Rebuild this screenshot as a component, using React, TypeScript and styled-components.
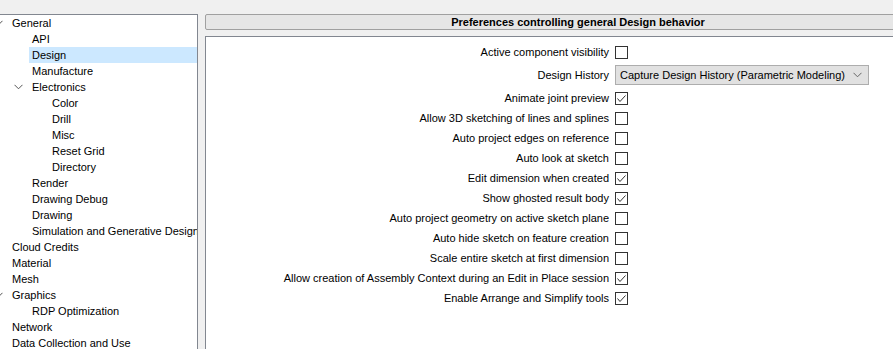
import React from 'react';
import styled, { createGlobalStyle } from 'styled-components';

const GlobalStyle = createGlobalStyle`
  html, body {
    margin: 0;
    padding: 0;
    background: #f0f0f0;
    overflow: hidden;
    font-family: 'Liberation Sans', Arial, sans-serif;
    font-size: 11px;
    color: #000;
  }
`;

const Page = styled.div`
  display: flex;
  align-items: flex-start;
  padding-top: 14px;
  height: 335px;
  overflow: hidden;
`;

const TreePanel = styled.div`
  flex: 0 0 198px;
  height: 360px;
  box-sizing: border-box;
  background: #fff;
  border-top: 1px solid #828790;
  border-right: 1px solid #828790;
  overflow: hidden;
`;

const TreeRow = styled.div<{ $level: number }>`
  display: flex;
  align-items: center;
  height: 16px;
  margin-left: ${(p) => (p.$level === 0 ? -6 : 0)}px;
  padding-left: ${(p) => (p.$level === 0 ? 0 : 20 * p.$level - 6)}px;
  white-space: nowrap;
`;

const Toggle = styled.span`
  flex: 0 0 18px;
  display: flex;
  align-items: center;
  height: 16px;
`;

const Label = styled.span<{ $selected?: boolean }>`
  display: flex;
  align-items: center;
  height: 16px;
  flex: 1;
  margin-left: -3px;
  padding-left: 3px;
  background: ${(p) => (p.$selected ? '#cce8ff' : 'transparent')};
`;

const RightPanel = styled.div`
  flex: 0 0 746px;
  margin-left: 7px;
  display: flex;
  flex-direction: column;
  gap: 6px;
`;

const Header = styled.div`
  height: 16px;
  box-sizing: border-box;
  border: 1px solid #a0a0a0;
  border-radius: 2px;
  background: #e6e6e6;
  font-weight: bold;
  text-align: center;
  line-height: 14px;
`;

const Content = styled.div`
  background: #fff;
  border-top: 1px solid #828790;
  border-left: 1px solid #828790;
  height: 330px;
  padding-top: 5px;
  display: grid;
  grid-template-columns: 403px 1fr;
  column-gap: 6px;
  align-content: start;
`;

const OptLabel = styled.div<{ $tall?: boolean }>`
  height: ${(p) => (p.$tall ? 26 : 20)}px;
  display: flex;
  align-items: center;
  justify-content: flex-end;
  white-space: nowrap;
`;

const OptControl = styled.div<{ $tall?: boolean }>`
  height: ${(p) => (p.$tall ? 26 : 20)}px;
  display: flex;
  align-items: center;
`;

const Box = styled.span`
  width: 13px;
  height: 13px;
  box-sizing: border-box;
  border: 1px solid #333;
  background: #fff;
  display: flex;
  align-items: center;
  justify-content: center;
`;

const Select = styled.div`
  width: 254px;
  height: 20px;
  box-sizing: border-box;
  border: 1px solid #adadad;
  background: #e1e1e1;
  display: flex;
  align-items: center;
  justify-content: space-between;
  padding: 0 6px 0 4px;
`;

const Chevron = ({ color = '#555' }: { color?: string }) => (
  <svg width="9" height="6" viewBox="0 0 9 6">
    <polyline points="0.5,0.8 4.5,4.8 8.5,0.8" fill="none" stroke={color} strokeWidth="1" />
  </svg>
);

const Checkbox = ({ checked }: { checked: boolean }) => (
  <Box>
    {checked && (
      <svg width="11" height="11" viewBox="0 0 11 11">
        <polyline points="1.5,5.5 4,8.5 9.5,2.5" fill="none" stroke="#333" strokeWidth="1" />
      </svg>
    )}
  </Box>
);

type Node = { label: string; level: number; open?: boolean; selected?: boolean };

const tree: Node[] = [
  { label: 'General', level: 0, open: true },
  { label: 'API', level: 1 },
  { label: 'Design', level: 1, selected: true },
  { label: 'Manufacture', level: 1 },
  { label: 'Electronics', level: 1, open: true },
  { label: 'Color', level: 2 },
  { label: 'Drill', level: 2 },
  { label: 'Misc', level: 2 },
  { label: 'Reset Grid', level: 2 },
  { label: 'Directory', level: 2 },
  { label: 'Render', level: 1 },
  { label: 'Drawing Debug', level: 1 },
  { label: 'Drawing', level: 1 },
  { label: 'Simulation and Generative Design', level: 1 },
  { label: 'Cloud Credits', level: 0 },
  { label: 'Material', level: 0 },
  { label: 'Mesh', level: 0 },
  { label: 'Graphics', level: 0, open: true },
  { label: 'RDP Optimization', level: 1 },
  { label: 'Network', level: 0 },
  { label: 'Data Collection and Use', level: 0 },
];

type Opt = { label: string; checked?: boolean; select?: string };

const options: Opt[] = [
  { label: 'Active component visibility', checked: false },
  { label: 'Design History', select: 'Capture Design History (Parametric Modeling)' },
  { label: 'Animate joint preview', checked: true },
  { label: 'Allow 3D sketching of lines and splines', checked: false },
  { label: 'Auto project edges on reference', checked: false },
  { label: 'Auto look at sketch', checked: false },
  { label: 'Edit dimension when created', checked: true },
  { label: 'Show ghosted result body', checked: true },
  { label: 'Auto project geometry on active sketch plane', checked: false },
  { label: 'Auto hide sketch on feature creation', checked: false },
  { label: 'Scale entire sketch at first dimension', checked: false },
  { label: 'Allow creation of Assembly Context during an Edit in Place session', checked: true },
  { label: 'Enable Arrange and Simplify tools', checked: true },
];

export default function App() {
  return (
    <>
      <GlobalStyle />
      <Page>
        <TreePanel>
          {tree.map((n) => (
            <TreeRow key={n.label} $level={n.level}>
              <Toggle>{n.open && <Chevron />}</Toggle>
              <Label $selected={n.selected}>{n.label}</Label>
            </TreeRow>
          ))}
        </TreePanel>
        <RightPanel>
          <Header>Preferences controlling general Design behavior</Header>
          <Content>
            {options.map((o) => (
              <React.Fragment key={o.label}>
                <OptLabel $tall={!!o.select}>{o.label}</OptLabel>
                <OptControl $tall={!!o.select}>
                  {o.select ? (
                    <Select>
                      <span>{o.select}</span>
                      <Chevron color="#666" />
                    </Select>
                  ) : (
                    <Checkbox checked={!!o.checked} />
                  )}
                </OptControl>
              </React.Fragment>
            ))}
          </Content>
        </RightPanel>
      </Page>
    </>
  );
}
